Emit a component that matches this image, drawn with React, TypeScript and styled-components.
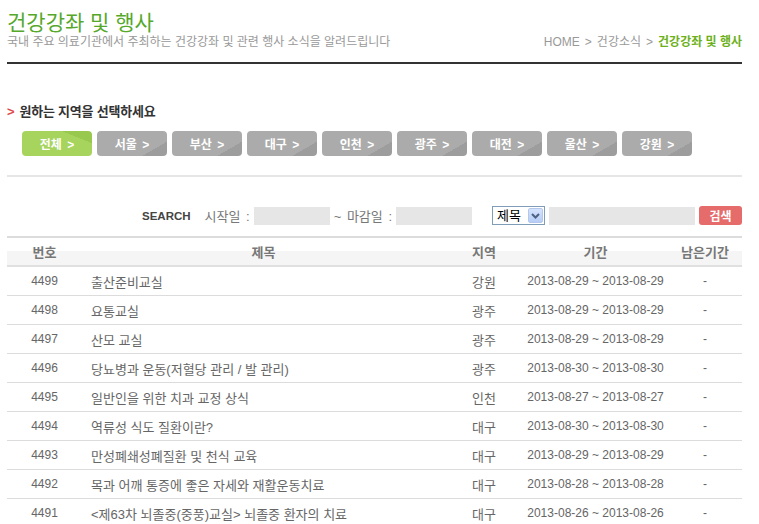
import styled, { createGlobalStyle } from 'styled-components';

const GlobalStyle = createGlobalStyle`
  body {
    margin: 0;
    background: #fff;
    font-family: "Liberation Sans", "Noto Sans CJK KR", sans-serif;
    font-size: 12px;
    color: #666;
  }
`;

const Page = styled.div`
  width: 735px;
  padding-left: 7px;
`;

const Header = styled.div`
  padding-top: 12px;
  height: 50px;
  border-bottom: 2px solid #333;
`;

const Title = styled.h1`
  margin: 0;
  font-size: 21px;
  line-height: 22px;
  font-weight: normal;
  color: #55a82a;
`;

const SubRow = styled.div`
  display: flex;
  justify-content: space-between;
  align-items: center;
  margin-top: 1px;
  line-height: 14px;
`;

const Subtitle = styled.p`
  margin: 0;
  font-size: 12px;
  color: #999;
`;

const Crumbs = styled.div`
  display: flex;
  align-items: center;
  gap: 5px;
  font-size: 12px;
  color: #999;
`;

const Crumb = styled.span<{ $current?: boolean }>`
  color: ${(p) => (p.$current ? '#6cb01a' : '#999')};
  font-weight: ${(p) => (p.$current ? 'bold' : 'normal')};
`;

const SectionTitle = styled.h2`
  margin: 40px 0 0;
  font-size: 13px;
  line-height: 16px;
  font-weight: bold;
  letter-spacing: -0.2px;
  color: #333;
  display: flex;
  align-items: center;
  gap: 5px;
`;

const RedMark = styled.span`
  color: #e04848;
  font-weight: bold;
`;

const RegionRow = styled.div`
  display: flex;
  gap: 5px;
  margin-top: 11px;
  padding-left: 15px;
`;

const RegionButton = styled.button<{ $active?: boolean }>`
  width: 70px;
  height: 25px;
  border: none;
  border-radius: 4px;
  padding: 0;
  color: #fff;
  font-family: inherit;
  font-size: 12px;
  font-weight: bold;
  word-spacing: 2px;
  cursor: pointer;
  background: ${(p) =>
    p.$active
      ? 'linear-gradient(22deg, #a6d45c 77%, #98c84d 77%)'
      : 'linear-gradient(150deg, #ababab 78%, #9d9d9d 78%)'};
`;

const Divider = styled.div`
  margin-top: 19px;
  height: 2px;
  background: #e6e6e6;
`;

const SearchRow = styled.div`
  display: flex;
  justify-content: flex-end;
  align-items: center;
  margin-top: 29px;
  height: 19px;
`;

const SearchLabel = styled.span`
  font-family: "Liberation Sans", sans-serif;
  font-size: 11.5px;
  font-weight: bold;
  color: #444;
  margin-right: 14px;
`;

const FieldLabel = styled.span`
  color: #777;
  font-size: 13px;
  word-spacing: 2px;
  margin-right: 4px;
`;

const Field = styled.div<{ $w: number; $gap?: number }>`
  width: ${(p) => p.$w}px;
  height: 18px;
  background: #e6e6e6;
  margin-right: ${(p) => p.$gap ?? 4}px;
`;

const SelectBox = styled.div`
  box-sizing: border-box;
  width: 53px;
  height: 19px;
  border: 1px solid #7f9db9;
  background: #fff;
  display: flex;
  align-items: center;
  justify-content: space-between;
  padding: 1px;
  margin-right: 4px;
  color: #000;
  font-size: 13px;
`;

const SelectText = styled.span`
  padding-left: 3px;
  line-height: 15px;
`;

const SelectArrow = styled.span`
  width: 15px;
  height: 15px;
  border-radius: 2px;
  background: linear-gradient(#d5e3fd, #b6cdf6);
  border: 1px solid #b4c8ee;
  box-sizing: border-box;
  display: flex;
  align-items: center;
  justify-content: center;
`;

const SearchButton = styled.button`
  width: 43px;
  height: 19px;
  border: none;
  border-radius: 3px;
  background: #e66b6b;
  color: #fff;
  font-family: inherit;
  font-size: 12px;
  font-weight: bold;
  padding: 0;
`;

const Table = styled.table`
  margin-top: 11px;
  width: 100%;
  border-collapse: collapse;
  border-top: 2px solid #dcdcdc;
`;

const HeadCell = styled.th<{ $w?: number }>`
  width: ${(p) => (p.$w ? `${p.$w}px` : 'auto')};
  height: 27px;
  padding: 0;
  font-size: 13px;
  font-weight: bold;
  color: #777;
  text-align: center;
  background: linear-gradient(#fff 13px, #f5f5f5 13px);
  border-bottom: 2px solid #e0e0e0;
`;

const Cell = styled.td<{ $left?: boolean; $kr?: boolean }>`
  height: 28px;
  padding: 0 0 0 ${(p) => (p.$left ? '9px' : '0')};
  text-align: ${(p) => (p.$left ? 'left' : 'center')};
  border-bottom: 1px solid #dcdcdc;
  color: #666;
  font-size: ${(p) => (p.$kr ? '13px' : '12px')};
  white-space: nowrap;
`;

interface Lecture {
  no: number;
  title: string;
  region: string;
  start: string;
  end: string;
}

const regions = ['전체', '서울', '부산', '대구', '인천', '광주', '대전', '울산', '강원'];

const lectures: Lecture[] = [
  { no: 4499, title: '출산준비교실', region: '강원', start: '2013-08-29', end: '2013-08-29' },
  { no: 4498, title: '요통교실', region: '광주', start: '2013-08-29', end: '2013-08-29' },
  { no: 4497, title: '산모 교실', region: '광주', start: '2013-08-29', end: '2013-08-29' },
  { no: 4496, title: '당뇨병과 운동(저혈당 관리 / 발 관리)', region: '광주', start: '2013-08-30', end: '2013-08-30' },
  { no: 4495, title: '일반인을 위한 치과 교정 상식', region: '인천', start: '2013-08-27', end: '2013-08-27' },
  { no: 4494, title: '역류성 식도 질환이란?', region: '대구', start: '2013-08-30', end: '2013-08-30' },
  { no: 4493, title: '만성폐쇄성폐질환 및 천식 교육', region: '대구', start: '2013-08-29', end: '2013-08-29' },
  { no: 4492, title: '목과 어깨 통증에 좋은 자세와 재활운동치료', region: '대구', start: '2013-08-28', end: '2013-08-28' },
  { no: 4491, title: '<제63차 뇌졸중(중풍)교실> 뇌졸중 환자의 치료', region: '대구', start: '2013-08-26', end: '2013-08-26' },
];

export default function App() {
  return (
    <Page>
      <GlobalStyle />
      <Header>
        <Title>건강강좌 및 행사</Title>
        <SubRow>
          <Subtitle>국내 주요 의료기관에서 주최하는 건강강좌 및 관련 행사 소식을 알려드립니다</Subtitle>
          <Crumbs>
            <Crumb>HOME</Crumb>
            <Crumb>&gt;</Crumb>
            <Crumb>건강소식</Crumb>
            <Crumb>&gt;</Crumb>
            <Crumb $current>건강강좌 및 행사</Crumb>
          </Crumbs>
        </SubRow>
      </Header>

      <SectionTitle>
        <RedMark>&gt;</RedMark>원하는 지역을 선택하세요
      </SectionTitle>
      <RegionRow>
        {regions.map((r, i) => (
          <RegionButton key={r} $active={i === 0}>
            {r} &gt;
          </RegionButton>
        ))}
      </RegionRow>

      <Divider />

      <SearchRow>
        <SearchLabel>SEARCH</SearchLabel>
        <FieldLabel>시작일 :</FieldLabel>
        <Field $w={76} />
        <FieldLabel>~ 마감일 :</FieldLabel>
        <Field $w={76} $gap={20} />
        <SelectBox>
          <SelectText>제목</SelectText>
          <SelectArrow>
            <svg width="9" height="6" viewBox="0 0 9 6">
              <path d="M1 1 L4.5 4.5 L8 1" fill="none" stroke="#4d6185" strokeWidth="2" />
            </svg>
          </SelectArrow>
        </SelectBox>
        <Field $w={146} />
        <SearchButton>검색</SearchButton>
      </SearchRow>

      <Table>
        <thead>
          <tr>
            <HeadCell $w={75}>번호</HeadCell>
            <HeadCell>제목</HeadCell>
            <HeadCell $w={78}>지역</HeadCell>
            <HeadCell $w={145}>기간</HeadCell>
            <HeadCell $w={74}>남은기간</HeadCell>
          </tr>
        </thead>
        <tbody>
          {lectures.map((l) => (
            <tr key={l.no}>
              <Cell>{l.no}</Cell>
              <Cell $left $kr>{l.title}</Cell>
              <Cell $kr>{l.region}</Cell>
              <Cell>
                {l.start} ~ {l.end}
              </Cell>
              <Cell>-</Cell>
            </tr>
          ))}
        </tbody>
      </Table>
    </Page>
  );
}
